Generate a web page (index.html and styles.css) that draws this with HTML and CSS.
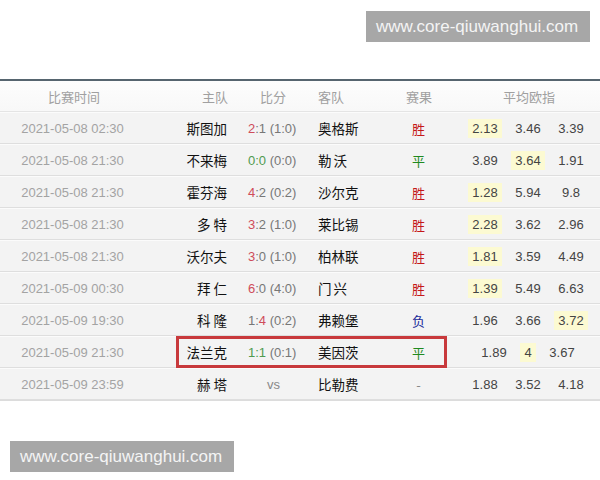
FILE: index.html
```html
<!DOCTYPE html>
<html lang="zh-CN">
<head>
    <meta charset="UTF-8">
    <meta name="viewport" content="width=device-width, initial-scale=1.0">
    <title>比赛结果</title>
    <link rel="stylesheet" href="styles.css">
</head>
<body>
    <div class="top-bar">
        <div class="stamp">www.core-qiuwanghui.com</div>
    </div>

    <div class="match-table">
        <div class="head">
            <div class="h-time">比赛时间</div>
            <div>主队</div>
            <div>比分</div>
            <div>客队</div>
            <div>赛果</div>
            <div>平均欧指</div>
        </div>

        <div class="row">
            <div class="time">2021-05-08 02:30</div>
            <div class="home">斯图加</div>
            <div class="score"><span class="win">2</span>:1 (1:0)</div>
            <div class="away">奥格斯</div>
            <div class="result r-win">胜</div>
            <div class="odds"><span class="pick">2.13</span><span>3.46</span><span>3.39</span></div>
        </div>

        <div class="row">
            <div class="time">2021-05-08 21:30</div>
            <div class="home">不来梅</div>
            <div class="score"><span class="draw">0:0</span> (0:0)</div>
            <div class="away wide">勒沃</div>
            <div class="result r-draw">平</div>
            <div class="odds"><span>3.89</span><span class="pick">3.64</span><span>1.91</span></div>
        </div>

        <div class="row">
            <div class="time">2021-05-08 21:30</div>
            <div class="home">霍芬海</div>
            <div class="score"><span class="win">4</span>:2 (0:2)</div>
            <div class="away">沙尔克</div>
            <div class="result r-win">胜</div>
            <div class="odds"><span class="pick">1.28</span><span>5.94</span><span>9.8</span></div>
        </div>

        <div class="row">
            <div class="time">2021-05-08 21:30</div>
            <div class="home">多 特</div>
            <div class="score"><span class="win">3</span>:2 (1:0)</div>
            <div class="away">莱比锡</div>
            <div class="result r-win">胜</div>
            <div class="odds"><span class="pick">2.28</span><span>3.62</span><span>2.96</span></div>
        </div>

        <div class="row">
            <div class="time">2021-05-08 21:30</div>
            <div class="home">沃尔夫</div>
            <div class="score"><span class="win">3</span>:0 (1:0)</div>
            <div class="away">柏林联</div>
            <div class="result r-win">胜</div>
            <div class="odds"><span class="pick">1.81</span><span>3.59</span><span>4.49</span></div>
        </div>

        <div class="row">
            <div class="time">2021-05-09 00:30</div>
            <div class="home">拜 仁</div>
            <div class="score"><span class="win">6</span>:0 (4:0)</div>
            <div class="away wide">门兴</div>
            <div class="result r-win">胜</div>
            <div class="odds"><span class="pick">1.39</span><span>5.49</span><span>6.63</span></div>
        </div>

        <div class="row">
            <div class="time">2021-05-09 19:30</div>
            <div class="home">科 隆</div>
            <div class="score">1:<span class="win">4</span> (0:2)</div>
            <div class="away">弗赖堡</div>
            <div class="result r-lose">负</div>
            <div class="odds"><span>1.96</span><span>3.66</span><span class="pick">3.72</span></div>
        </div>

        <div class="row marked">
            <div class="time">2021-05-09 21:30</div>
            <div class="home">法兰克</div>
            <div class="score"><span class="draw">1:1</span> (0:1)</div>
            <div class="away">美因茨</div>
            <div class="result r-draw">平</div>
            <div class="odds odds-tight"><span>1.89</span><span class="pick">4</span><span>3.67</span></div>
            <div class="mark-box"></div>
        </div>

        <div class="row">
            <div class="time">2021-05-09 23:59</div>
            <div class="home">赫 塔</div>
            <div class="score vs">vs</div>
            <div class="away">比勒费</div>
            <div class="result">-</div>
            <div class="odds"><span>1.88</span><span>3.52</span><span>4.18</span></div>
        </div>
    </div>

    <div class="bottom-bar">
        <div class="stamp">www.core-qiuwanghui.com</div>
    </div>
</body>
</html>
```

FILE: styles.css
```css
body {
    margin: 0;
    font-family: "Liberation Sans", "Noto Sans CJK SC", sans-serif;
    background: #fff;
    color: #333;
}

.top-bar {
    height: 79px;
    box-sizing: border-box;
    padding: 11px 10px 0 0;
    display: flex;
    justify-content: flex-end;
    align-items: flex-start;
}

.bottom-bar {
    padding: 40px 0 0 10px;
    display: flex;
}

.stamp {
    background: #a7a7a7;
    color: #f4f4f4;
    font-family: "Liberation Sans", sans-serif;
    font-size: 17px;
    line-height: 31px;
    padding: 0 10px;
    width: 204px;
    white-space: nowrap;
}

.match-table {
    border-top: 2px solid #56656f;
    border-bottom: 1px solid #dcdcdc;
}

.head {
    display: grid;
    grid-template-columns: 202px 58px 58px 88px 97px 1fr;
    height: 30px;
    align-items: center;
    background: linear-gradient(#fdfdfd, #f8f8f8);
    border-bottom: 1px solid #e4e4e4;
    color: #a0a0a0;
    font-family: "Noto Sans CJK SC", sans-serif;
    font-size: 13px;
}

.h-time {
    padding-left: 48px;
}

.row {
    position: relative;
    display: grid;
    grid-template-columns: 145px 87px 80px 74px 65px 1fr;
    height: 32px;
    box-sizing: border-box;
    align-items: center;
    background: #f3f3f3;
    border-top: 1px solid #fbfbfb;
    border-bottom: 1px solid #dedede;
    font-size: 13px;
}

.time {
    text-align: center;
    color: #a3a3a3;
}

.home {
    text-align: right;
    padding-right: 5px;
    color: #111;
    font-family: "Noto Sans CJK SC", sans-serif;
    font-size: 13.5px;
}

.away {
    padding-left: 6px;
    color: #111;
    font-family: "Noto Sans CJK SC", sans-serif;
    font-size: 13.5px;
}

.away.wide {
    letter-spacing: 2px;
}

.score {
    padding-left: 16px;
    color: #777;
}

.score.vs {
    padding-left: 35px;
    color: #888;
}

.win {
    color: #cf4c5a;
}

.draw {
    color: #4f9a4f;
}

.result {
    text-align: center;
    font-family: "Noto Sans CJK SC", sans-serif;
    color: #888;
}

.r-win {
    color: #c41818;
}

.r-draw {
    color: #1f8a1f;
}

.r-lose {
    color: #1a2a9a;
}

.odds {
    display: grid;
    grid-template-columns: repeat(3, 43px);
    justify-content: center;
    padding-left: 5px;
    color: #444;
}

.odds span {
    justify-self: center;
    padding: 2px 4px;
}

.odds-tight {
    grid-template-columns: repeat(3, 34px);
}

.pick {
    background: #fcfad2;
}

.mark-box {
    position: absolute;
    left: 176px;
    top: -1px;
    width: 271px;
    height: 32px;
    box-sizing: border-box;
    border: 3px solid #c8393c;
}
```
